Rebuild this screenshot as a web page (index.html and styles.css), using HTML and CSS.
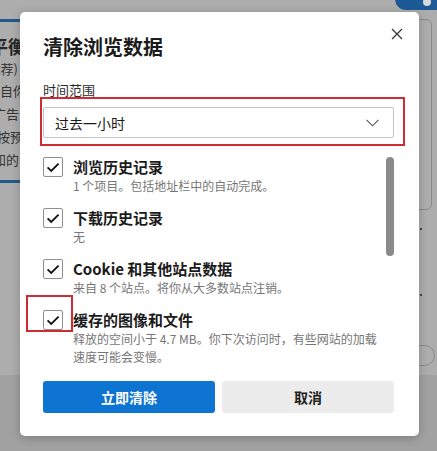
FILE: index.html
```html
<!DOCTYPE html>
<html lang="zh-CN">
<head>
<meta charset="utf-8">
<title>清除浏览数据</title>
<link rel="stylesheet" href="styles.css">
</head>
<body>
<div class="page">
  <div class="page-top">
    <div class="strip-left">
      <div class="bg-rule first"></div>
      <div class="bg-head">平衡</div>
      <div class="bg-line l1">(推荐)</div>
      <div class="bg-line l2">来自你</div>
      <div class="bg-line l3">广告</div>
      <div class="bg-line l4">按预</div>
      <div class="bg-line l5">知的</div>
      <div class="bg-rule second"></div>
    </div>
    <div class="strip-mid"></div>
    <div class="strip-right">
      <div class="bg-toggle"><span class="knob"></span></div>
      <div class="bg-card"></div>
      <div class="bg-dot d1"></div>
      <div class="bg-dot d2"></div>
      <div class="bg-switch"></div>
    </div>
  </div>
  <div class="page-bottom"></div>
</div>

<div class="dialog" role="dialog" aria-label="清除浏览数据">
  <div class="dialog-head">
    <h1 class="dialog-title">清除浏览数据</h1>
    <button class="close" aria-label="关闭">
      <svg width="12" height="12" viewBox="0 0 12 12"><path d="M1 1 L11 11 M11 1 L1 11" stroke="#333" stroke-width="1.2" fill="none"/></svg>
    </button>
  </div>

  <div class="field-label">时间范围</div>
  <div class="select">
    <span class="select-value">过去一小时</span>
    <svg class="chev" width="13" height="8" viewBox="0 0 13 8"><path d="M0.5 0.8 L6.5 6.8 L12.5 0.8" stroke="#555" stroke-width="1.1" fill="none"/></svg>
  </div>

  <div class="list-wrap">
    <div class="list">
      <div class="item">
        <span class="cb"><svg width="20" height="20" viewBox="0 0 20 20"><path d="M4.6 10.4 L8.2 14 L15.6 6.6" stroke="#111" stroke-width="1.8" fill="none"/></svg></span>
        <div class="item-text">
          <div class="item-title">浏览历史记录</div>
          <div class="item-sub">1 个项目。包括地址栏中的自动完成。</div>
        </div>
      </div>
      <div class="item">
        <span class="cb"><svg width="20" height="20" viewBox="0 0 20 20"><path d="M4.6 10.4 L8.2 14 L15.6 6.6" stroke="#111" stroke-width="1.8" fill="none"/></svg></span>
        <div class="item-text">
          <div class="item-title">下载历史记录</div>
          <div class="item-sub">无</div>
        </div>
      </div>
      <div class="item">
        <span class="cb"><svg width="20" height="20" viewBox="0 0 20 20"><path d="M4.6 10.4 L8.2 14 L15.6 6.6" stroke="#111" stroke-width="1.8" fill="none"/></svg></span>
        <div class="item-text">
          <div class="item-title">Cookie 和其他站点数据</div>
          <div class="item-sub">来自 8 个站点。将你从大多数站点注销。</div>
        </div>
      </div>
      <div class="item">
        <span class="cb"><svg width="20" height="20" viewBox="0 0 20 20"><path d="M4.6 10.4 L8.2 14 L15.6 6.6" stroke="#111" stroke-width="1.8" fill="none"/></svg></span>
        <div class="item-text">
          <div class="item-title">缓存的图像和文件</div>
          <div class="item-sub">释放的空间小于 4.7 MB。你下次访问时，有些网站的加载速度可能会变慢。</div>
        </div>
      </div>
    </div>
    <div class="scroll-track"><div class="scroll-thumb"></div></div>
  </div>

  <div class="actions">
    <button class="btn primary">立即清除</button>
    <button class="btn secondary">取消</button>
  </div>

  <div class="mark mark-range"></div>
  <div class="mark mark-cache"></div>
</div>
</body>
</html>
```

FILE: styles.css
```css
* { box-sizing: border-box; }
html, body { margin: 0; padding: 0; }
body {
  width: 437px;
  height: 451px;
  overflow: hidden;
  position: relative;
  background: #a1a1a1;
  font-family: "Noto Sans CJK SC", "Noto Sans", sans-serif;
}

/* dimmed page behind the dialog */
.page { display: flex; flex-direction: column; height: 451px; }
.page-top { display: flex; height: 375px; background: #adadad; }
.page-bottom { flex: 1; background: #a1a1a1; }

.strip-left { width: 34px; overflow: hidden; display: flex; flex-direction: column; color: #262626; }
.bg-rule { height: 3px; background: #235a8e; }
.bg-rule.first { margin-top: 19px; }
.bg-rule.second { margin-top: 9px; }
.bg-head { font-size: 18px; font-weight: 700; line-height: 24px; margin-top: 12px; margin-left: -10px; white-space: nowrap; }
.bg-line { font-size: 13px; line-height: 23px; white-space: nowrap; color: #333; }
.bg-line.l1 { margin-left: -17px; line-height: 20px; margin-top: 1px; }
.bg-line.l2 { margin-left: -13px; }
.bg-line.l3 { margin-left: -7px; }
.bg-line.l4 { margin-left: -3px; }
.bg-line.l5 { margin-left: -7px; }

.strip-mid { flex: 1; }
.strip-right { width: 60px; display: flex; flex-direction: column; }
.bg-toggle { width: 60px; height: 22px; margin-top: -12px; margin-left: 18px; background: #1c5a97; border-radius: 11px; position: relative; }
.bg-toggle .knob { position: absolute; left: 28px; top: 10px; width: 8px; height: 8px; border-radius: 50%; background: #d8d8d8; }
.bg-card { width: 40px; height: 191px; margin-top: 9px; margin-left: 15px; border: 1px solid #8a8a8a; border-radius: 6px; }
.bg-dot { width: 2px; height: 2px; background: #444; margin-left: 43px; }
.bg-dot.d1 { margin-top: 18px; }
.bg-dot.d2 { margin-top: 64px; }
.bg-switch { width: 40px; height: 21px; margin-top: 49px; margin-left: 18px; border: 1px solid #888; border-radius: 11px; }

/* dialog */
.dialog {
  position: absolute;
  left: 20px;
  top: 12px;
  width: 399px;
  height: 424px;
  background: #fff;
  border-radius: 5px;
  box-shadow: 0 2px 10px rgba(0,0,0,0.22);
  padding: 0 25px 0 23px;
  display: flex;
  flex-direction: column;
  color: #1a1a1a;
}
.dialog-head { display: flex; justify-content: space-between; align-items: flex-start; }
.dialog-title { margin: 21px 0 0 0; font-size: 20px; font-weight: 700; line-height: 28px; color: #1b1b1b; }
.close { margin: 14px -11px 0 0; width: 16px; height: 16px; padding: 0; border: 0; background: transparent; display: flex; align-items: center; justify-content: center; }

.field-label { margin-top: 20px; font-size: 13px; line-height: 18px; color: #2b2b2b; }
.select {
  margin-top: 8px;
  height: 31px;
  border: 1px solid #c4c4c4;
  border-radius: 2px;
  display: flex;
  align-items: center;
  justify-content: space-between;
  padding: 0 14px 0 11px;
}
.select-value { font-size: 14px; color: #1a1a1a; }
.chev { margin-top: 1px; }

.list-wrap { margin-top: 19px; display: flex; }
.list { flex: 1; display: flex; flex-direction: column; gap: 13px; }
.item { display: flex; gap: 10px; }
.cb { flex: none; width: 20px; height: 20px; border: 1px solid #8f8f8f; border-radius: 2px; display: flex; align-items: center; justify-content: center; }
.cb svg { display: block; margin: -1px; }
.item-text { display: flex; flex-direction: column; }
.item-title { font-size: 15px; line-height: 20px; font-weight: 600; color: #1b1b1b; }
.item-sub { font-size: 12px; line-height: 18px; color: #767676; padding-right: 0; }
.scroll-track { flex: none; width: 8px; margin-left: 3px; }
.scroll-thumb { width: 8px; height: 99px; border-radius: 4px; background: #8a8a8a; }

.actions { margin-top: auto; margin-bottom: 23px; display: flex; gap: 7px; }
.btn { flex: 1; height: 32px; border: 0; border-radius: 3px; font-family: inherit; font-size: 14px; font-weight: 700; }
.btn.primary { background: #0e74d2; color: #fff; }
.btn.secondary { background: #ececec; color: #1f1f1f; font-weight: 600; }

/* red annotation frames */
.mark { position: absolute; border: 2px solid #cf2b35; }
.mark-range { left: 20px; top: 85px; width: 365px; height: 49px; }
.mark-cache { left: 6px; top: 283px; width: 47px; height: 37px; }
```
